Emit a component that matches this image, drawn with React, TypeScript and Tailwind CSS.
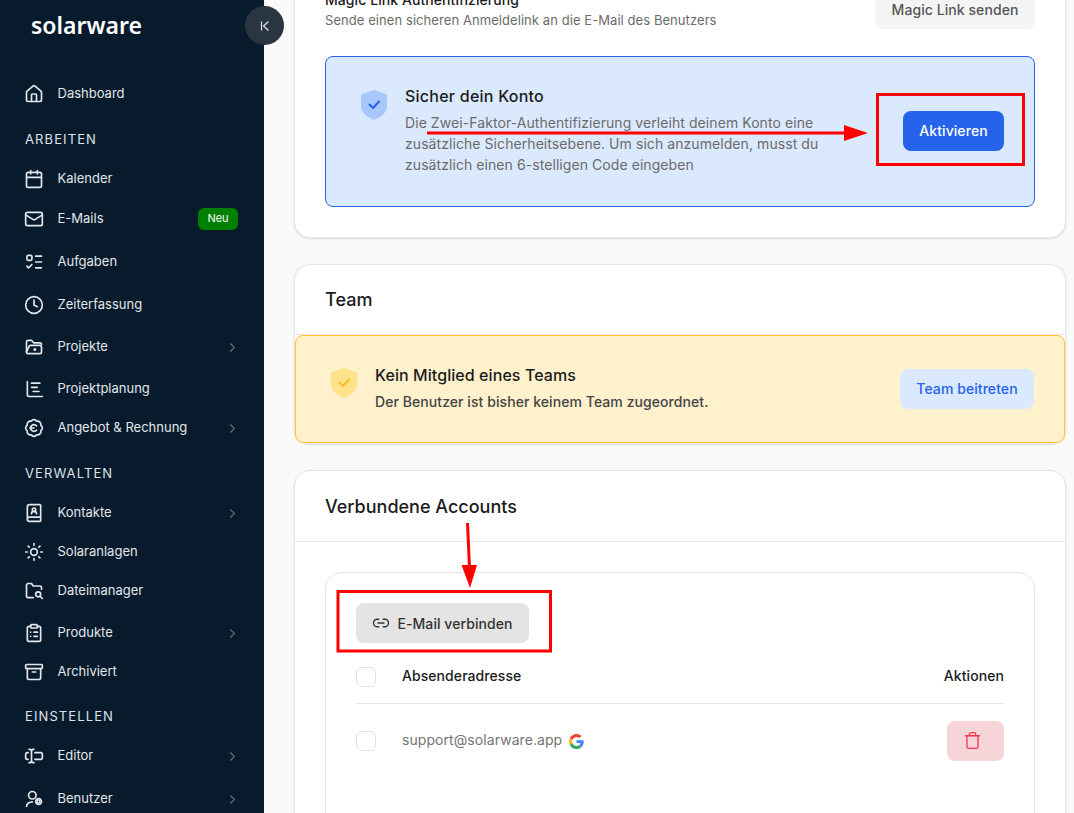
import {
  Archive,
  BadgeEuro,
  BookUser,
  Calendar,
  ChevronRight,
  ClipboardList,
  Clock,
  House,
  Link2,
  Mail,
  Sun,
  TextCursorInput,
  Trash,
} from "lucide-react";
import type { ReactNode } from "react";

const svgProps = {
  width: 20,
  height: 20,
  viewBox: "0 0 24 24",
  fill: "none",
  stroke: "currentColor",
  strokeWidth: 2,
  strokeLinecap: "round" as const,
  strokeLinejoin: "round" as const,
};

const TasksIcon = () => (
  <svg {...svgProps}>
    <rect x="3.5" y="4" width="6" height="6" rx="1.5" />
    <path d="M3.5 17l2 2 4-4" />
    <path d="M14 5h7M14 12h7M14 19h7" />
  </svg>
);

const ProjectFolderIcon = () => (
  <svg {...svgProps}>
    <path d="M3 18V6a2 2 0 0 1 2-2h4l2.5 3H19a2 2 0 0 1 2 2" />
    <path d="M3 18a2 2 0 0 0 2 2h14a2 2 0 0 0 2-2v-6a2 2 0 0 0-2-2H8a2 2 0 0 0-2 1.5L3 18z" />
    <circle cx="13" cy="15" r="0.8" fill="currentColor" />
  </svg>
);

const PlanningIcon = () => (
  <svg {...svgProps}>
    <path d="M4 3v16a2 2 0 0 0 2 2h16" />
    <path d="M9 5h10M9 10h7M11 15h7" />
  </svg>
);

const FolderSearchIcon = () => (
  <svg {...svgProps}>
    <path d="M11 20H5a2 2 0 0 1-2-2V5a2 2 0 0 1 2-2h4l2 3h8a2 2 0 0 1 2 2v2" />
    <circle cx="17" cy="16" r="3" />
    <path d="M19.5 18.5L22 21" />
  </svg>
);

const UserGearIcon = () => (
  <svg {...svgProps}>
    <circle cx="10" cy="7.5" r="4.5" />
    <path d="M3 21c0-3 3-5.500 7-5.500" />
    <circle cx="17.500" cy="15" r="1.800" />
    <circle cx="17.500" cy="15" r="3.500" strokeDasharray="1.600 1.150" />
  </svg>
);

type Row =
  | { kind: "label"; text: string; mt: string }
  | { kind: "item"; text: string; icon: ReactNode; mt: string; more?: boolean; badge?: string };

const rows: Row[] = [
  { kind: "item", text: "Dashboard", icon: <House size={20} />, mt: "mt-0" },
  { kind: "label", text: "ARBEITEN", mt: "mt-[23px]" },
  { kind: "item", text: "Kalender", icon: <Calendar size={20} />, mt: "mt-[18px]" },
  { kind: "item", text: "E-Mails", icon: <Mail size={20} />, mt: "mt-[16px]", badge: "Neu" },
  { kind: "item", text: "Aufgaben", icon: <TasksIcon />, mt: "mt-[19px]" },
  { kind: "item", text: "Zeiterfassung", icon: <Clock size={20} />, mt: "mt-[19px]" },
  { kind: "item", text: "Projekte", icon: <ProjectFolderIcon />, mt: "mt-[18px]", more: true },
  { kind: "item", text: "Projektplanung", icon: <PlanningIcon />, mt: "mt-[18px]" },
  { kind: "item", text: "Angebot & Rechnung", icon: <BadgeEuro size={20} />, mt: "mt-[15px]", more: true },
  { kind: "label", text: "VERWALTEN", mt: "mt-[23px]" },
  { kind: "item", text: "Kontakte", icon: <BookUser size={20} />, mt: "mt-[18px]", more: true },
  { kind: "item", text: "Solaranlagen", icon: <Sun size={20} />, mt: "mt-[15px]" },
  { kind: "item", text: "Dateimanager", icon: <FolderSearchIcon />, mt: "mt-[15px]" },
  { kind: "item", text: "Produkte", icon: <ClipboardList size={20} />, mt: "mt-[18px]", more: true },
  { kind: "item", text: "Archiviert", icon: <Archive size={20} />, mt: "mt-[15px]" },
  { kind: "label", text: "EINSTELLEN", mt: "mt-[22px]" },
  { kind: "item", text: "Editor", icon: <TextCursorInput size={20} />, mt: "mt-[18px]", more: true },
  { kind: "item", text: "Benutzer", icon: <UserGearIcon />, mt: "mt-[19px]", more: true },
];

const Sidebar = () => (
  <aside className="relative w-[264px] shrink-0 bg-[#071b2d] tracking-normal text-[#e3e6ea]">
    <div className="h-[82px] pl-[31px] pt-[8px] font-['Noto_Sans',sans-serif] text-[23px] leading-[34px] font-semibold text-white">
      solarware
    </div>
    <div className="flex flex-col pl-[24px] pr-[26px]">
      {rows.map((row) =>
        row.kind === "label" ? (
          <div
            key={row.text}
            className={`${row.mt} h-[20px] pl-px text-[13px] leading-[20px] tracking-[1.1px] text-[#dfe3e8]`}
          >
            {row.text}
          </div>
        ) : (
          <div key={row.text} className={`${row.mt} flex h-[24px] shrink-0 items-center`}>
            <span className="flex w-[20px] justify-center">{row.icon}</span>
            <span className="ml-[13.5px] text-[13px]">{row.text}</span>
            {row.more && <ChevronRight size={15} className="-mr-[2px] ml-auto text-[#5d6874]" />}
            {row.badge && (
              <span className="ml-auto flex h-[22px] w-[40px] items-center justify-center rounded-md bg-[#008000] pb-px text-[11px] text-white">
                {row.badge}
              </span>
            )}
          </div>
        ),
      )}
    </div>
    <button className="absolute top-[6px] left-[245px] flex h-[39px] w-[39px] items-center justify-center rounded-full bg-[#2a3542] text-[#e3e6ea]">
      <svg width="14" height="14" viewBox="0 0 14 14" fill="none" stroke="currentColor" strokeWidth="1.2">
        <path d="M3.5 2.5v9M10.5 2.5L5.5 7l5 4.5" />
      </svg>
    </button>
  </aside>
);

const Shield = ({ fill, check }: { fill: string; check: string }) => (
  <svg width="28" height="30" viewBox="0 0 28 30" className="shrink-0">
    <path d="M14 0L27 4.500V16C27 23 20 27.500 14 30C8 27.500 1 23 1 16V4.500L14 0Z" fill={fill} />
    <path d="M9.500 14.500L13 18L19 11.500" fill="none" stroke={check} strokeWidth="2" strokeLinecap="round" strokeLinejoin="round" />
  </svg>
);

const GoogleIcon = () => (
  <svg width="15" height="15" viewBox="0 0 48 48">
    <path fill="#EA4335" d="M24 9.500c3.500 0 6.700 1.200 9.200 3.600l6.900-6.900C35.900 2.400 30.500 0 24 0 14.600 0 6.500 5.400 2.600 13.200l8 6.200C12.500 13.700 17.800 9.500 24 9.500z" />
    <path fill="#4285F4" d="M47 24.500c0-1.600-.1-3.100-.4-4.500H24v9h12.900c-.6 3-2.200 5.500-4.800 7.200l7.700 6c4.500-4.200 7.200-10.300 7.200-17.700z" />
    <path fill="#FBBC05" d="M10.600 28.600c-.5-1.400-.8-3-.8-4.600s.3-3.200.8-4.600l-8-6.200C.9 16.500 0 20.100 0 24s.9 7.500 2.600 10.800l8-6.200z" />
    <path fill="#34A853" d="M24 48c6.500 0 11.900-2.100 15.800-5.800l-7.700-6c-2.100 1.400-4.900 2.300-8.100 2.300-6.200 0-11.500-4.200-13.400-9.900l-8 6.200C6.500 42.600 14.600 48 24 48z" />
  </svg>
);

const Checkbox = ({ className }: { className?: string }) => (
  <span className={`h-[20px] w-[20px] shrink-0 rounded-md border border-[#dcdfe8] bg-white ${className ?? ""}`} />
);

const Annotations = () => (
  <svg width="1074" height="813" className="pointer-events-none absolute top-0 left-0">
    <rect x="877.500" y="94.500" width="146" height="70" fill="none" stroke="#ff0000" strokeWidth="3" />
    <rect x="338" y="591.500" width="212.500" height="59.500" fill="none" stroke="#ff0000" strokeWidth="3" />
    <path d="M427 133H846" stroke="#ff0000" strokeWidth="3" />
    <path d="M844 125L868 133L844 141Z" fill="#ff0000" />
    <path d="M467.500 523L469.500 568" stroke="#ff0000" strokeWidth="3" />
    <path d="M461.500 565L477 565L470 588Z" fill="#ff0000" />
  </svg>
);

export default function App() {
  return (
    <div className="relative flex h-[813px] w-[1074px] overflow-hidden bg-[#fafafa] font-['Inter',sans-serif] text-[14px] tracking-[0.07px] text-[#1b1b1b]">
      <Sidebar />
      <main className="flex-1 pl-[30px] pr-[8px]">
        <div className="-mt-[40px] flex flex-col gap-[26px]">
          <section className="rounded-2xl border border-[#e6e6e6] bg-white px-[30px] pt-[28px] pb-[30px] shadow-sm">
            <div className="flex items-end justify-between">
              <div className="text-[#1b1b1b]">
                <div className="leading-[21px] font-medium">Magic Link Authentifizierung</div>
                <div className="text-[13px] leading-[21px] text-[#6b6b6b]">
                  Sende einen sicheren Anmeldelink an die E-Mail des Benutzers
                </div>
              </div>
              <button className="mb-[2px] h-[40px] w-[160px] rounded-lg bg-[#f4f4f4] font-medium text-[#555555]">
                Magic Link senden
              </button>
            </div>
            <div className="mt-[25px] flex h-[151px] items-center justify-between rounded-lg border border-[#2563eb] bg-[#dbe9fe] pr-[30px] pl-[34px]">
              <div className="-mt-[5px] flex items-start gap-[17px]">
                <div className="mt-[6px]">
                  <Shield fill="#a9c6fb" check="#2563eb" />
                </div>
                <div>
                  <div className="text-[16px] leading-[24px] font-medium tracking-[0.24px]">Sicher dein Konto</div>
                  <p className="mt-[4px] w-[430px] leading-[21px] text-[#6b6b6b]">
                    Die Zwei-Faktor-Authentifizierung verleiht deinem Konto eine zusätzliche Sicherheitsebene. Um sich
                    anzumelden, musst du zusätzlich einen 6-stelligen Code eingeben
                  </p>
                </div>
              </div>
              <button className="-mt-[2px] h-[40px] w-[101px] rounded-lg bg-[#2563eb] font-medium text-white">
                Aktivieren
              </button>
            </div>
          </section>

          <section className="rounded-2xl border border-[#e6e6e6] bg-white shadow-sm">
            <div className="flex h-[70px] items-center border-b border-[#e6e6e6] px-[30px] text-[18px] font-medium">
              Team
            </div>
            <div className="flex h-[108px] items-center justify-between rounded-lg border border-[#fbc32d] bg-[#fef1cc] pr-[30px] pl-[34px]">
              <div className="-mt-[4px] flex items-start gap-[17px]">
                <div className="mt-[5px]">
                  <Shield fill="#fee28c" check="#fbbf24" />
                </div>
                <div>
                  <div className="text-[16px] leading-[24px] font-medium">Kein Mitglied eines Teams</div>
                  <div className="mt-[4px] leading-[21px] font-medium text-[#444444]">
                    Der Benutzer ist bisher keinem Team zugeordnet.
                  </div>
                </div>
              </div>
              <button className="-mt-px h-[40px] w-[134px] rounded-lg bg-[#dbe9fe] font-medium text-[#2563eb]">
                Team beitreten
              </button>
            </div>
          </section>

          <section className="h-[500px] rounded-2xl border border-[#e6e6e6] bg-white shadow-sm">
            <div className="flex h-[71px] items-center border-b border-[#e6e6e6] px-[30px] text-[18px] font-medium tracking-normal">
              Verbundene Accounts
            </div>
            <div className="mx-[30px] mt-[30px] h-[400px] rounded-2xl border border-[#e6e6e6] px-[30px] pt-[30px]">
              <button className="flex h-[40px] w-[173px] items-center justify-center gap-[7px] rounded-lg bg-[#e4e4e4] font-medium text-[#333333]">
                <Link2 size={18} strokeWidth={1.8} />
                E-Mail verbinden
              </button>
              <div className="flex h-[61px] items-center border-b border-[#e6e6e6] pt-[4px]">
                <Checkbox className="mt-[4px]" />
                <span className="ml-[26px] font-medium">Absenderadresse</span>
                <span className="ml-auto font-medium">Aktionen</span>
              </div>
              <div className="flex h-[74px] items-center">
                <Checkbox />
                <span className="ml-[26px] -mt-[3px] text-[#757575]">support@solarware.app</span>
                <span className="ml-[7px]">
                  <GoogleIcon />
                </span>
                <button className="-mt-px ml-auto flex h-[40px] w-[57px] items-center justify-center rounded-lg bg-[#f6d4d8] pr-[7px] text-[#ef3a4f]">
                  <Trash size={19} strokeWidth={1.7} />
                </button>
              </div>
            </div>
          </section>
        </div>
      </main>
      <Annotations />
    </div>
  );
}
